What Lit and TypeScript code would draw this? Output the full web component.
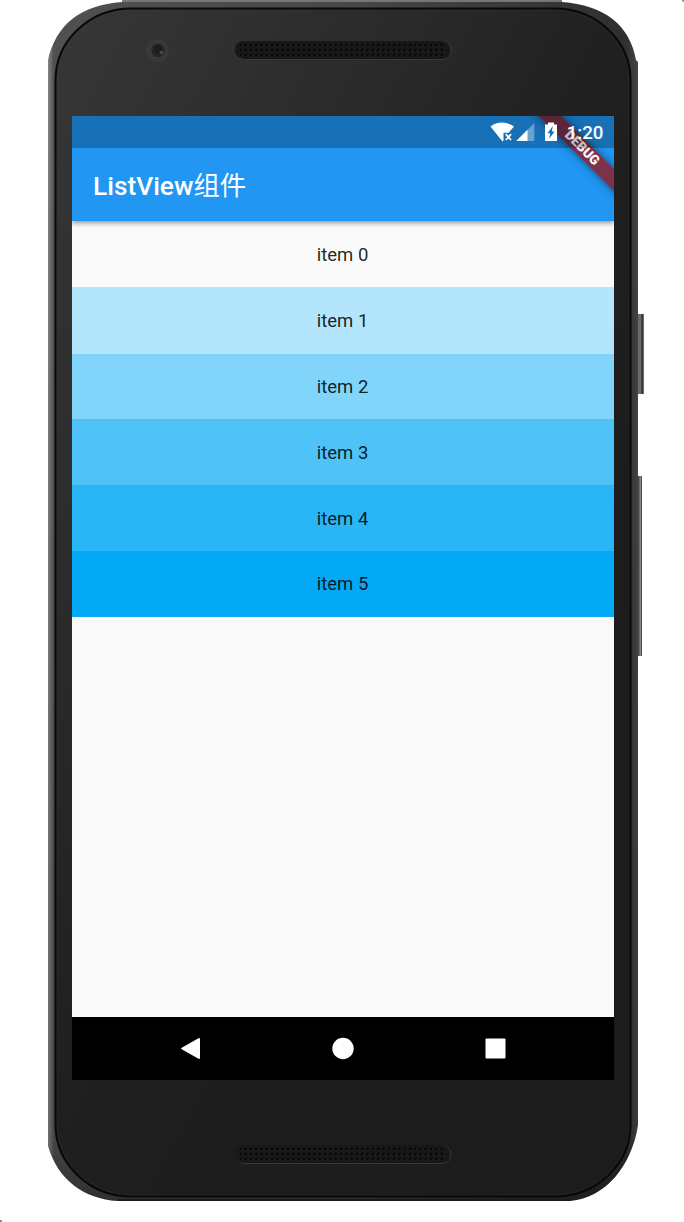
import { LitElement, html, css, svg } from "lit";
import { customElement } from "lit/decorators.js";

const COLORS = ["#fafafa", "#b3e5fc", "#81d4fa", "#4fc3f7", "#29b6f6", "#03a9f4"];
const OUTER =
  "M122 0H562V2C604 5 630 25 636 60L638 62V1125C632 1165 606 1198 570 1201H118C84 1199 58 1180 48 1146V60C56 25 80 5 122 2Z";

@customElement("phone-frame")
export class PhoneFrame extends LitElement {
  static styles = css`
    :host { display: block; }
    .frame { display: block; }
  `;

  private speaker(y: number, line: string) {
    return svg`
      <g transform="translate(0 ${y})">
        <rect x="235.500" y="0.500" width="215.500" height="18" rx="9" fill="#131314" stroke=${line} />
        <rect x="234.500" y="0" width="215.500" height="17.500" rx="8.750" fill="#181819" />
        <rect x="240" y="2.500" width="206" height="3" fill="url(#holes)" />
        <rect x="240" y="7.500" width="206" height="3" fill="url(#holes)" />
        <rect x="240" y="12.500" width="206" height="3" fill="url(#holes)" />
      </g>`;
  }

  render() {
    return html`<svg class="frame" width="684" height="1222" viewBox="0 0 684 1222" aria-hidden="true">
      <defs>
        <linearGradient id="body" gradientUnits="userSpaceOnUse" x1="56" y1="9" x2="700" y2="360">
          <stop offset="0" stop-color="#373738" />
          <stop offset="0.200" stop-color="#313132" />
          <stop offset="0.450" stop-color="#292929" />
          <stop offset="0.700" stop-color="#202020" />
          <stop offset="1" stop-color="#1c1c1c" />
        </linearGradient>
        <linearGradient id="rim" x1="0" y1="0" x2="1" y2="0">
          <stop offset="0" stop-color="#858585" />
          <stop offset="0.010" stop-color="#505050" />
          <stop offset="0.500" stop-color="#484848" />
          <stop offset="0.980" stop-color="#302e2f" />
          <stop offset="1" stop-color="#474546" />
        </linearGradient>
        <linearGradient id="rimShade" x1="0" y1="0" x2="0" y2="1">
          <stop offset="0" stop-color="#000" stop-opacity="0" />
          <stop offset="0.950" stop-color="#000" stop-opacity="0.150" />
          <stop offset="1" stop-color="#000" stop-opacity="0.400" />
        </linearGradient>
        <pattern id="holes" width="5.300" height="5" patternUnits="userSpaceOnUse" y="2.500">
          <circle cx="2" cy="1.500" r="1.400" fill="#040404" />
          <circle cx="3.400" cy="2.400" r="0.600" fill="#2b2b2b" />
        </pattern>
      </defs>
      <rect x="636" y="314" width="8" height="80" fill="#6a6a6a" />
      <rect x="641.500" y="314" width="1.200" height="80" fill="#272525" />
      <rect x="636" y="476" width="6" height="180" fill="#4a4849" />
      <rect x="639.500" y="476" width="1.500" height="180" fill="#8b8989" />
      <path d=${OUTER} fill="url(#rim)" />
      <path d=${OUTER} fill="url(#rimShade)" />
      <rect x="122" y="0" width="440" height="2" fill="#777" />
      <rect x="118" y="1199" width="452" height="2" fill="#1b191a" />
      <rect x="55.500" y="8.500" width="575" height="1188" rx="76" ry="72" fill="url(#body)" stroke="#080808" stroke-width="2" />
      <rect x="57" y="10" width="572" height="1185" rx="75" ry="71" fill="none" stroke="#3c3c3c" stroke-opacity="0.250" stroke-width="1" />
      <circle cx="157.300" cy="50.700" r="11.500" fill="#39393a" />
      <circle cx="158" cy="50.500" r="6.700" fill="#242427" />
      <circle cx="158" cy="49.500" r="4" fill="#1b1b20" />
      <circle cx="161.500" cy="52.500" r="2" fill="#52404f" />
      ${this.speaker(41, "#3b3b3b")}
      ${this.speaker(1145, "#3a3a3a")}
      <rect x="682" y="0" width="2" height="1.500" fill="#8a8a8a" />
      <rect x="0" y="1220" width="2" height="2" fill="#8a8a8a" />
    </svg>`;
  }
}

@customElement("status-bar")
export class StatusBar extends LitElement {
  static styles = css`
    :host {
      display: flex;
      align-items: center;
      justify-content: flex-end;
      box-sizing: border-box;
      height: 32px;
      padding-right: 10.5px;
      background: rgba(0, 0, 0, 0.25);
      color: #fff;
      font: 500 18.7px/32px Roboto, sans-serif;
    }
    .icons { display: block; flex: none; margin-right: 9px; }
    .time { padding-top: 2px; }
  `;
  render() {
    return html`<svg class="icons" width="68" height="32" viewBox="0 0 68 32" aria-hidden="true">
        <path d="M0.500 10.500Q5.500 6.500 12 6.500T24 10.500L18.700 16.700H13.500V24.500L12.500 25.500Z" fill="#fff" />
        <path d="M15.800 18.200L21 24M21 18.200L15.800 24" stroke="#fff" stroke-width="1.800" />
        <path d="M44.300 7V25H26.300Z" fill="#fff" fill-opacity="0.350" />
        <path d="M37.500 13.800V25H26.300Z" fill="#fff" />
        <path d="M58 6.500H64V8.500H67V25H55V8.500H58Z" fill="#fff" />
        <path d="M62.800 10L57.500 17.200H60.200L59.300 22.700L64.600 15.500H61.900Z" fill="#1a70b6" />
      </svg><span class="time">1:20</span>`;
  }
}

@customElement("app-root")
export class AppRoot extends LitElement {
  static styles = css`
    :host {
      display: block;
      position: relative;
      box-sizing: border-box;
      width: 684px;
      height: 1222px;
      padding: 116px 70px 142px 72px;
      background: #fff;
      overflow: hidden;
      font-family: Roboto, "Noto Sans CJK SC", sans-serif;
    }
    .case { position: absolute; inset: 0; }
    .screen {
      position: relative;
      display: flex;
      flex-direction: column;
      width: 542px;
      height: 964px;
      overflow: hidden;
      background: #fafafa;
    }
    .header {
      position: relative;
      flex: none;
      height: 105px;
      background: #2196f3;
      box-shadow: 0 2px 5px rgba(0, 0, 0, 0.42);
      z-index: 1;
    }
    .status { position: relative; z-index: 2; }
    .title {
      margin: 0;
      padding-left: 21px;
      color: #fff;
      font-size: 26.3px;
      font-weight: 500;
      line-height: 77px;
      white-space: nowrap;
    }
    .cjk { font-family: "Noto Sans CJK SC", sans-serif; font-weight: 400; line-height: 1; }
    .ribbon {
      position: absolute;
      z-index: 1;
      left: 450px;
      top: 24px;
      width: 120px;
      height: 16px;
      transform: rotate(45deg);
      background: rgba(131, 43, 64, 0.95);
      box-shadow: 0 0 8px rgba(0, 0, 0, 0.5);
      color: #fff;
      font-size: 13.4px;
      font-weight: 900;
      line-height: 16px;
      text-align: center;
    }
    .list {
      flex: 1;
      display: grid;
      grid-template-rows: 66px 67px 65px 66px 66px 66px;
      align-content: start;
    }
    .item {
      display: grid;
      place-items: center;
      padding-top: 1px;
      padding-right: 1px;
      color: rgba(0, 0, 0, 0.87);
      font-size: 18.5px;
    }
    .item:last-child { padding-top: 0; padding-bottom: 1px; }
    .nav { flex: none; height: 63px; background: #000; }
    .keys { display: block; }
  `;

  render() {
    return html`
      <phone-frame class="case"></phone-frame>
      <main class="screen">
        <header class="header">
          <status-bar class="status"></status-bar>
          <h1 class="title">ListView<span class="cjk">组件</span></h1>
          <div class="ribbon">DEBUG</div>
        </header>
        <section class="list">
          ${COLORS.map((c, i) => html`<div class="item" style="background:${c}">item ${i}</div>`)}
        </section>
        <nav class="nav">
          <svg class="keys" width="542" height="63" viewBox="0 0 542 63" fill="#fff" stroke="#fff" stroke-linejoin="round">
            <path d="M110.200 31.500L127 22V41Z" stroke-width="2" />
            <circle cx="271" cy="31.500" r="10.700" stroke="none" />
            <rect x="413.500" y="21.500" width="20" height="20" rx="1" stroke="none" />
          </svg>
        </nav>
      </main>
    `;
  }
}
